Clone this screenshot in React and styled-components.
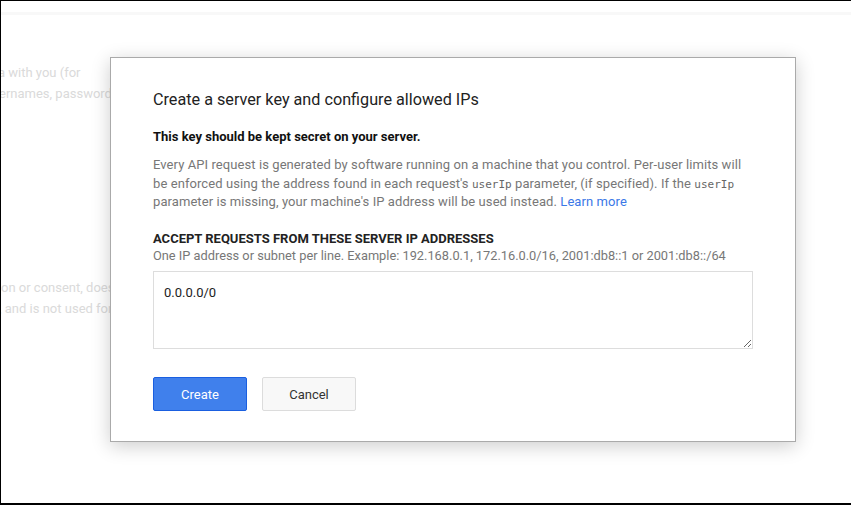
import styled, { createGlobalStyle } from 'styled-components';

const GlobalStyle = createGlobalStyle`
  * {
    box-sizing: border-box;
  }

  body {
    margin: 0;
    background: #fff;
    font-family: Roboto, 'Liberation Sans', Arial, sans-serif;
  }
`;

const Frame = styled.div`
  position: relative;
  width: 851px;
  height: 505px;
  overflow: hidden;
  background: #fff;
  border-top: 1px solid #000;
  border-left: 1px solid #000;
  border-bottom: 2px solid #000;
`;

const TopBar = styled.div`
  height: 14px;
  border-bottom: 3px solid #f8f8f8;
`;

const Backdrop = styled.div`
  padding-top: 47px;
  color: #dadada;
  font-size: 13px;
`;

const BgBlock = styled.div`
  margin-bottom: ${(p) => p.$gap || 0}px;
`;

const BgLine = styled.div`
  white-space: nowrap;
  line-height: 21px;
  margin-left: ${(p) => p.$shift || 0}px;
`;

const Dialog = styled.div`
  position: absolute;
  left: 109px;
  top: 56px;
  width: 686px;
  height: 385px;
  background: #fff;
  border: 1px solid #aaa;
  box-shadow: 0 4px 18px rgba(0, 0, 0, 0.2);
  padding: 32px 42px 30px;
  color: #222;
`;

const Title = styled.h2`
  margin: 0 0 18px;
  font-size: 16.2px;
  line-height: 20px;
  font-weight: 400;
  color: #222;
`;

const Warning = styled.p`
  margin: 0 0 10px;
  font-size: 13px;
  line-height: 18px;
  font-weight: 700;
  color: #111;
`;

const Body = styled.p`
  margin: 0 0 18px;
  font-size: 13px;
  letter-spacing: 0.08px;
  line-height: 18.5px;
  color: #777;
`;

const Code = styled.code`
  font-family: 'DejaVu Sans Mono', 'Liberation Mono', monospace;
  font-size: 11px;
  line-height: 0;
  letter-spacing: 0;
  color: #666;
`;

const Link = styled.a`
  color: #3b78e7;
  text-decoration: none;
`;

const FieldLabel = styled.div`
  font-size: 13px;
  line-height: 17px;
  font-weight: 700;
  color: #222;
`;

const FieldHint = styled.div`
  font-size: 12.8px;
  line-height: 17px;
  color: #777;
  margin-bottom: 7.5px;
`;

const TextArea = styled.textarea`
  display: block;
  width: 600px;
  height: 78px;
  margin: 0 0 28px;
  padding: 12px 10px 10px;
  border: 1px solid #ddd;
  border-radius: 0;
  font-family: Roboto, 'Liberation Sans', Arial, sans-serif;
  font-size: 13px;
  line-height: 18px;
  color: #222;
  outline: none;
`;

const Actions = styled.div`
  display: flex;
  gap: 15px;
`;

const Button = styled.button`
  width: 94px;
  height: 34px;
  padding-top: 1px;
  border-radius: 2px;
  font-family: Roboto, 'Liberation Sans', Arial, sans-serif;
  font-size: 13px;
  cursor: pointer;
  border: 1px solid ${(p) => (p.$primary ? '#1a5fe0' : '#dcdcdc')};
  background: ${(p) => (p.$primary ? '#4080ec' : '#f8f8f8')};
  color: ${(p) => (p.$primary ? '#fff' : '#333')};
`;

export default function App() {
  return (
    <>
      <GlobalStyle />
      <Frame>
        <TopBar />
        <Backdrop>
          <BgBlock $gap={173}>
            <BgLine $shift={-3}>a with you (for</BgLine>
            <BgLine $shift={-2}>ernames, passwords, and other</BgLine>
          </BgBlock>
          <BgBlock>
            <BgLine $shift={0}>on or consent, does not</BgLine>
            <BgLine $shift={-2}>, and is not used for</BgLine>
          </BgBlock>
        </Backdrop>

        <Dialog>
          <Title>Create a server key and configure allowed IPs</Title>
          <Warning>This key should be kept secret on your server.</Warning>
          <Body>
            Every API request is generated by software running on a machine
            that you control. Per-user limits will be enforced using the
            address found in each request's <Code>userIp</Code> parameter, (if
            specified). If the <Code>userIp</Code> parameter is missing, your
            machine's IP address will be used instead.{' '}
            <Link href="#">Learn more</Link>
          </Body>
          <FieldLabel>ACCEPT REQUESTS FROM THESE SERVER IP ADDRESSES</FieldLabel>
          <FieldHint>
            One IP address or subnet per line. Example: 192.168.0.1,
            172.16.0.0/16, 2001:db8::1 or 2001:db8::/64
          </FieldHint>
          <TextArea defaultValue="0.0.0.0/0" />
          <Actions>
            <Button $primary>Create</Button>
            <Button>Cancel</Button>
          </Actions>
        </Dialog>
      </Frame>
    </>
  );
}
